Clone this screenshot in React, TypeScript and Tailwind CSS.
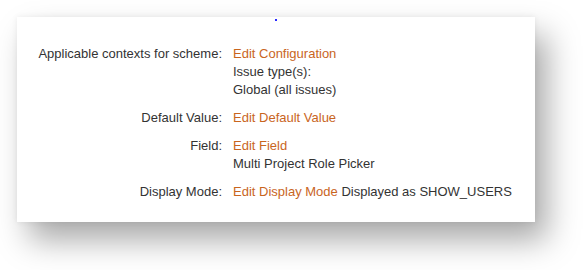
const rows = [
  { label: 'Applicable contexts for scheme:', link: 'Edit Configuration', lines: ['Issue type(s):', 'Global (all issues)'] },
  { label: 'Default Value:', link: 'Edit Default Value', lines: [] },
  { label: 'Field:', link: 'Edit Field', lines: ['Multi Project Role Picker'] },
]

export default function App() {
  return (
    <div className="w-[583px] h-[270px] bg-white pt-[17px] pl-[17px] overflow-hidden" style={{ fontFamily: '"Liberation Sans", Arial, sans-serif' }}>
      <div className="relative w-[518px] h-[205px] bg-white shadow-[12px_18px_30px_rgba(0,0,0,0.34),0_0_6px_rgba(0,0,0,0.07)] pt-[28px]">
        {/* tiny blue dot */}
        <div className="absolute left-[258px] top-[2px] w-[2px] h-[2px] bg-[#2a2aff]"></div>

        <div className="flex flex-col gap-[10px] text-[13px] leading-[18px] text-[#333]">
          {rows.map((r) => (
            <div key={r.label} className="flex">
              <div className="w-[205px] text-right shrink-0">{r.label}</div>
              <div className="pl-[11px]">
                <div className="text-[#c9651e]">{r.link}</div>
                {r.lines.map((l) => (
                  <div key={l}>{l}</div>
                ))}
              </div>
            </div>
          ))}
          <div className="flex">
            <div className="w-[205px] text-right shrink-0">Display Mode:</div>
            <div className="pl-[11px]">
              <span className="text-[#c9651e]">Edit Display Mode</span> Displayed as SHOW_USERS
            </div>
          </div>
        </div>
      </div>
    </div>
  )
}
